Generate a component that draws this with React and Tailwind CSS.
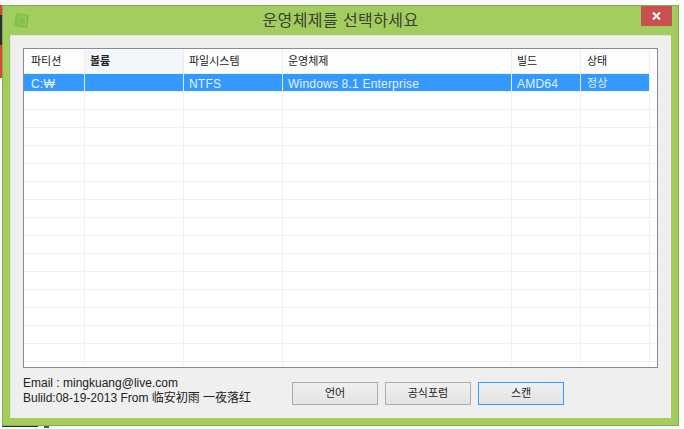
import React from "react";

const columns = [
  { label: "파티션", width: "w-[61px]", pad: "pl-[7px]" },
  { label: "볼륨", width: "w-[99px]", pad: "pl-[5px]", bold: true },
  { label: "파일시스템", width: "w-[99px]", pad: "pl-[5px]" },
  { label: "운영체제", width: "w-[229px]", pad: "pl-[5px]" },
  { label: "빌드", width: "w-[69px]", pad: "pl-[5px]" },
  { label: "상태", width: "w-[69px]", pad: "pl-[6px]" },
];

const selected = ["C:₩", "", "NTFS", "Windows 8.1 Enterprise", "AMD64", "정상"];
const emptyRows = Array.from({ length: 15 });

const Cell = ({ column, children, className = "" }) => (
  <div className={`${column.width} ${column.pad} h-full shrink-0 border-r flex items-center whitespace-nowrap ${className}`}>
    {children}
  </div>
);

const WinButton = ({ children, active }) => (
  <button
    className={`w-[86px] h-[23px] border text-[11px] text-[#222] bg-gradient-to-b from-[#f0f0f0] to-[#e3e3e3] flex items-center justify-center ${
      active ? "border-[#3399ff]" : "border-[#acacac]"
    }`}
  >
    {children}
  </button>
);

export default function App() {
  return (
    <div className="w-[684px] h-[429px] bg-[#fbfbfb] overflow-hidden relative font-['Liberation_Sans','Noto_Sans_CJK_KR',sans-serif]">
      {/* bits of the desktop showing behind the dialog */}
      <div className="absolute left-0 top-[5px] w-[3px] h-[10px] bg-[#d9472b]" />
      <div className="absolute left-0 top-[15px] w-[3px] h-[30px] bg-[#2b2b33]" />
      <div className="absolute left-0 top-[45px] w-[3px] h-[33px] bg-[#d9472b]" />
      <div className="absolute left-[2px] top-[416px] w-px h-[11px] bg-[#222]" />
      <div className="absolute left-[2px] top-[426px] w-[36px] h-px bg-[#333]" />
      <div className="absolute left-[44px] top-[426px] w-[5px] h-[2px] bg-[#555]" />

      <div className="ml-[2px] mt-[5px] w-[677px] h-[421px] border border-[#86ab55] bg-[#a3cd5e] flex flex-col relative">
        <div className="h-[29px] shrink-0 flex items-center relative">
          <svg className="absolute left-[10px] top-[6px]" width="17" height="17" viewBox="0 0 18 18">
            <path d="M3 1 L17 3 L15 17 L1 15 Z" fill="#85bf4d" />
            <rect x="6" y="5" width="7" height="8" fill="none" stroke="#9ccb5a" strokeWidth="1.2" />
          </svg>
          <div className="w-full text-center text-[16px] text-[#3a3f33] tracking-[0.4px]">운영체제를 선택하세요</div>
          <div className="absolute right-[6px] top-0 w-[31px] h-[20px] bg-[#c75050] flex items-center justify-center">
            <svg width="9" height="8" viewBox="0 0 9 8">
              <path d="M1 0.5 L8 7.5 M8 0.5 L1 7.5" stroke="#fff" strokeWidth="2" />
            </svg>
          </div>
        </div>

        <div className="mx-[7px] w-[661px] h-[383px] bg-[#efefef] border-t border-l border-[#dfe5d8] pt-[12px] pl-[12px]">
          <div className="w-[635px] h-[320px] bg-white border border-[#8a8a94] overflow-hidden">
            <div className="h-[25px] flex text-[11px] text-[#222] border-b border-[#eef1f5] pt-px">
              {columns.map((c) => (
                <Cell
                  key={c.label}
                  column={c}
                  className={c.bold ? "border-[#e3edf7] bg-[#f3f7fb] font-bold" : "border-[#e8eef6] bg-[#fdfdfe]"}
                >
                  {c.label}
                </Cell>
              ))}
            </div>
            <div className="h-[18px] flex text-[12px] text-[#e6f1ff] border-b border-[#f0f0f0] bg-[linear-gradient(to_right,#3399ff_625px,#fff_625px)]">
              {columns.map((c, i) => (
                <Cell key={c.label} column={c} className={`border-[#e2eefb] tracking-[0.2px] pt-[2px] ${i === 5 ? "text-[11px]" : ""}`}>
                  {selected[i]}
                </Cell>
              ))}
            </div>
            {emptyRows.map((_, r) => (
              <div key={r} className="h-[18px] flex border-b border-[#f0f0f0]">
                {columns.map((c) => (
                  <Cell key={c.label} column={c} className="border-[#f0f0f0]" />
                ))}
              </div>
            ))}
            <div className="h-[4px] flex">
              {columns.map((c) => (
                <Cell key={c.label} column={c} className="border-[#f0f0f0]" />
              ))}
            </div>
          </div>

          <div className="flex items-start justify-between w-[541px] mt-[8px]">
            <div className="text-[12px] leading-[15px] text-[#222] whitespace-nowrap w-[268px]">
              <div>Email : mingkuang@live.com</div>
              <div>Bulild:08-19-2013 From 临安初雨 一夜落红</div>
            </div>
            <div className="flex gap-[7px] mt-[6px]">
              <WinButton>언어</WinButton>
              <WinButton>공식포럼</WinButton>
              <WinButton active>스캔</WinButton>
            </div>
          </div>
        </div>
      </div>
    </div>
  );
}
